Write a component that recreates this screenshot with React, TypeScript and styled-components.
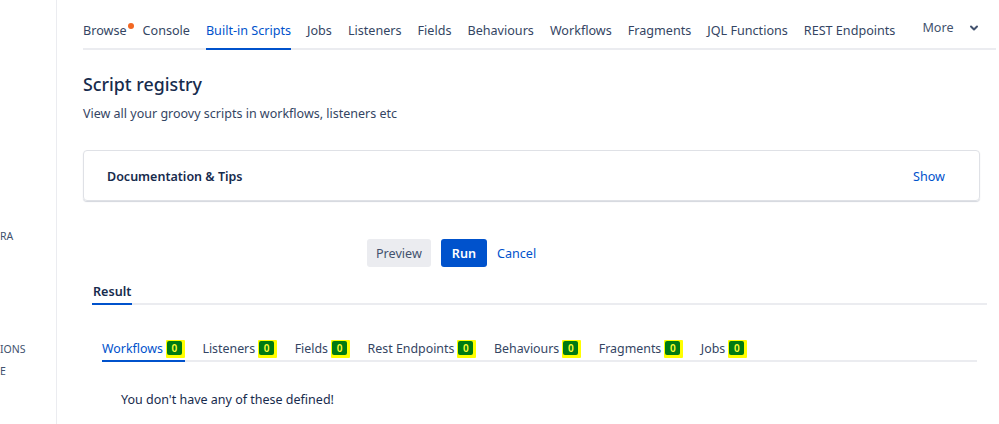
import React from "react";
import styled, { createGlobalStyle } from "styled-components";

const Global = createGlobalStyle`
  html, body { margin: 0; padding: 0; background: #fff; }
  body { font-family: "Noto Sans", "Open Sans", sans-serif; color: #172b4d; }
  * { box-sizing: border-box; }
`;

const Page = styled.div`
  display: flex;
  width: 999px;
  height: 424px;
  overflow: hidden;
`;

const Sidebar = styled.aside`
  width: 57px;
  flex: none;
  border-right: 1px solid #ebecf0;
  display: flex;
  flex-direction: column;
`;

const SideLabel = styled.div<{ $top: number }>`
  margin-top: ${(p) => p.$top}px;
  white-space: nowrap;
  font-size: 10.5px;
  line-height: 14px;
  color: #42526e;
`;

const Main = styled.main`
  flex: 1;
  min-width: 0;
  padding: 0 3px 0 26px;
  display: flex;
  flex-direction: column;
`;

const Nav = styled.nav`
  display: flex;
  align-items: flex-end;
  height: 50px;
  border-bottom: 2px solid #ebecf0;
`;

const NavItem = styled.div<{ $active?: boolean }>`
  position: relative;
  font-size: 12.6px;
  line-height: 18px;
  padding-bottom: 8px;
  margin-right: 16px;
  margin-bottom: -2px;
  white-space: nowrap;
  color: ${(p) => (p.$active ? "#0052cc" : "#344563")};
  border-bottom: 2px solid ${(p) => (p.$active ? "#0052cc" : "transparent")};
`;

const Dot = styled.span`
  position: absolute;
  right: -7px;
  top: 1px;
  width: 6px;
  height: 6px;
  border-radius: 50%;
  background: #f26722;
`;

const More = styled.div`
  margin-left: 11px;
  display: flex;
  align-items: center;
  gap: 15px;
  font-size: 12.6px;
  line-height: 18px;
  padding-bottom: 11px;
  white-space: nowrap;
  color: #42526e;
`;

const Title = styled.h1`
  margin: 22px 0 0;
  font-size: 17.8px;
  font-weight: 500;
  line-height: 24px;
  color: #172b4d;
`;

const Subtitle = styled.p`
  margin: 9px 0 0;
  font-size: 12.5px;
  line-height: 18px;
  color: #344563;
`;

const Card = styled.div`
  margin: 27px 16px 0 0;
  height: 51px;
  border: 1px solid #dfe1e6;
  border-radius: 4px;
  box-shadow: 0 1px 1px rgba(9, 30, 66, 0.18);
  display: flex;
  align-items: center;
  justify-content: space-between;
  padding: 2px 34px 0 23px;
`;

const CardTitle = styled.div`
  font-size: 12.5px;
  font-weight: 600;
  color: #172b4d;
`;

const LinkText = styled.span`
  font-size: 12.6px;
  color: #0052cc;
`;

const Actions = styled.div`
  display: flex;
  align-items: center;
  gap: 10px;
  margin: 38px 0 0 284px;
`;

const Button = styled.button<{ $primary?: boolean }>`
  font-family: inherit;
  font-size: 12.6px;
  height: 28px;
  border: none;
  border-radius: 3px;
  padding: 0 ${(p) => (p.$primary ? 11 : 9)}px;
  font-weight: ${(p) => (p.$primary ? 600 : 400)};
  background: ${(p) => (p.$primary ? "#0052cc" : "#ebecf0")};
  color: ${(p) => (p.$primary ? "#fff" : "#42526e")};
`;

const ResultTabs = styled.div`
  margin: 16px 9px 0 9px;
  display: flex;
  border-bottom: 2px solid #ebecf0;
`;

const ResultTab = styled.div`
  font-size: 12.6px;
  font-weight: 600;
  line-height: 18px;
  padding: 0 1px 2px 1px;
  margin-bottom: -2px;
  border-bottom: 2px solid #0052cc;
  color: #172b4d;
`;

const SubTabs = styled.div`
  margin: 35px 19px 0 19px;
  display: flex;
  align-items: flex-end;
  border-bottom: 2px solid #ebecf0;
`;

const SubTab = styled.div<{ $active?: boolean }>`
  display: flex;
  align-items: center;
  gap: 3px;
  font-size: 12.4px;
  line-height: 18px;
  padding-bottom: 2px;
  margin-right: 17.5px;
  margin-bottom: -2px;
  white-space: nowrap;
  color: ${(p) => (p.$active ? "#0052cc" : "#344563")};
  border-bottom: 2px solid ${(p) => (p.$active ? "#0052cc" : "transparent")};
`;

const Highlight = styled.span`
  display: inline-flex;
  padding: 1px 3px 3px 1px;
  background: #ffff00;
  border-radius: 1px;
`;

const Badge = styled.span`
  display: inline-flex;
  align-items: center;
  justify-content: center;
  width: 15px;
  height: 14px;
  border-radius: 2px;
  background: #007a12;
  color: #ffff33;
  font-size: 10px;
  font-weight: 600;
  line-height: 14px;
`;

const Empty = styled.div`
  margin: 29px 0 0 38px;
  font-size: 12.5px;
  line-height: 18px;
  color: #172b4d;
`;

const navItems = [
  "Browse",
  "Console",
  "Built-in Scripts",
  "Jobs",
  "Listeners",
  "Fields",
  "Behaviours",
  "Workflows",
  "Fragments",
  "JQL Functions",
  "REST Endpoints",
];

const subTabs = [
  "Workflows",
  "Listeners",
  "Fields",
  "Rest Endpoints",
  "Behaviours",
  "Fragments",
  "Jobs",
];

export default function App() {
  return (
    <>
      <Global />
      <Page>
        <Sidebar>
          <SideLabel $top={229}>RA</SideLabel>
          <SideLabel $top={99}>IONS</SideLabel>
          <SideLabel $top={8}>E</SideLabel>
        </Sidebar>
        <Main>
          <Nav>
            {navItems.map((n) => (
              <NavItem key={n} $active={n === "Built-in Scripts"}>
                {n}
                {n === "Browse" && <Dot />}
              </NavItem>
            ))}
            <More>
              More
              <svg width="10" height="10" viewBox="0 0 10 10">
                <path d="M2 3.5 L5 6.5 L8 3.5" fill="none" stroke="#42526e" strokeWidth="2" strokeLinecap="round" strokeLinejoin="round" />
              </svg>
            </More>
          </Nav>
          <Title>Script registry</Title>
          <Subtitle>View all your groovy scripts in workflows, listeners etc</Subtitle>
          <Card>
            <CardTitle>Documentation &amp; Tips</CardTitle>
            <LinkText>Show</LinkText>
          </Card>
          <Actions>
            <Button>Preview</Button>
            <Button $primary>Run</Button>
            <LinkText>Cancel</LinkText>
          </Actions>
          <ResultTabs>
            <ResultTab>Result</ResultTab>
          </ResultTabs>
          <SubTabs>
            {subTabs.map((s, i) => (
              <SubTab key={s} $active={i === 0}>
                {s}
                <Highlight>
                  <Badge>0</Badge>
                </Highlight>
              </SubTab>
            ))}
          </SubTabs>
          <Empty>You don't have any of these defined!</Empty>
        </Main>
      </Page>
    </>
  );
}
